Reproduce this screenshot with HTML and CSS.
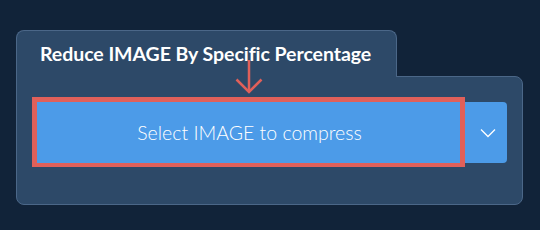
FILE: index.html
```html
<!DOCTYPE html>
<html>
<head>
<meta charset="utf-8">
<link rel="stylesheet" href="styles.css">
</head>
<body>
<div class="card">
  <div class="tab"><span class="tab-title">Reduce IMAGE By Specific Percentage</span></div>
  <div class="panel">
    <div class="select-btn">Select IMAGE to compress</div>
    <div class="drop-btn">
      <svg width="16" height="10" viewBox="0 0 16 10"><polyline points="1,1.5 8,8.5 15,1.5" fill="none" stroke="#ffffff" stroke-width="1.3"/></svg>
    </div>
  </div>
  <svg class="arrow" width="28" height="34" viewBox="0 0 28 34"><line x1="14" y1="0" x2="14" y2="32" stroke="#e0605a" stroke-width="2.5"/><polyline points="1.5,19.5 14,32 26.5,19.5" fill="none" stroke="#e0605a" stroke-width="2.5"/></svg>
</div>
</body>
</html>
```
FILE: styles.css
```css
html, body {
  margin: 0;
  padding: 0;
  background: #112339;
  width: 540px;
  height: 230px;
  overflow: hidden;
  font-family: Lato, "Open Sans", sans-serif;
}
.card {
  position: relative;
  margin: 30px 0 0 16px;
  width: 507px;
}
.tab {
  position: relative;
  z-index: 1;
  box-sizing: border-box;
  width: 381px;
  height: 47px;
  margin-bottom: -1px;
  background: #2d4968;
  border: 1px solid #4b6788;
  border-bottom: none;
  border-radius: 8px 8px 0 0;
  padding: 12px 0 0 23px;
}
.tab-title {
  color: #ffffff;
  font-weight: 700;
  font-size: 19.5px;
  line-height: 22px;
  letter-spacing: -0.05px;
}
.panel {
  box-sizing: border-box;
  height: 129px;
  background: #2d4968;
  border: 1px solid #4b6788;
  border-radius: 0 8px 8px 8px;
  padding: 20px 15px;
  display: flex;
  align-items: flex-start;
}
.select-btn {
  box-sizing: border-box;
  width: 434px;
  height: 70px;
  background: #4c9be8;
  border: 5px solid #e0605a;
  border-bottom-width: 4px;
  color: #ffffff;
  font-size: 19.5px;
  font-weight: 300;
  display: flex;
  align-items: center;
  justify-content: center;
  padding-left: 2px;
}
.drop-btn {
  margin-top: 5px;
  width: 42px;
  height: 61px;
  background: #4c9be8;
  border-radius: 0 4px 4px 0;
  display: flex;
  align-items: center;
  justify-content: center;
  padding-left: 3px;
  box-sizing: border-box;
}
.drop-btn svg { display: block; margin-top: 1px; }
.arrow {
  position: absolute;
  left: 219px;
  top: 30px;
  z-index: 2;
}
```
